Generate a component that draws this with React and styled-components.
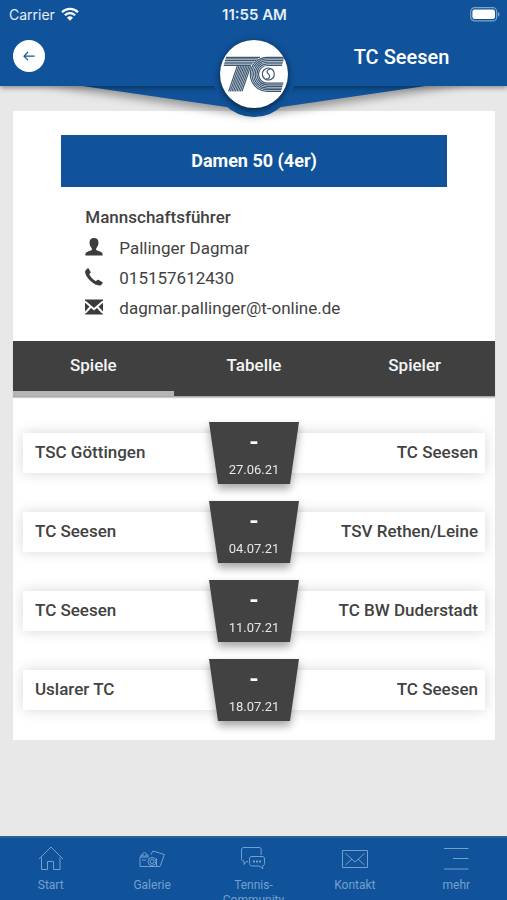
import React, { useState } from "react";
import styled, { createGlobalStyle } from "styled-components";

const GlobalStyle = createGlobalStyle`
  * {
    box-sizing: border-box;
  }

  body {
    margin: 0;
    background: #e8e8e8;
    font-family: Roboto, "Liberation Sans", sans-serif;
    color: #424242;
  }

  button {
    font-family: inherit;
    border: none;
    cursor: pointer;
  }
`;

const Page = styled.div`
  display: flex;
  flex-direction: column;
  height: 100vh;
  overflow: hidden;
`;

const Header = styled.header`
  position: relative;
  z-index: 2;
  flex-shrink: 0;
`;

const HeaderBar = styled.div`
  position: relative;
  background: #10539a;
  box-shadow: 0 2px 5px rgba(0, 0, 0, 0.4);
  color: #fff;
`;

const StatusBar = styled.div`
  display: grid;
  grid-template-columns: 1fr auto 1fr;
  align-items: center;
  height: 28px;
  padding: 0 7px 0 9px;
  font-family: Inter, Roboto, sans-serif;
  font-size: 14px;
  color: #e6eef7;
`;

const Carrier = styled.div`
  display: flex;
  align-items: center;
  gap: 6px;
`;

const Clock = styled.div`
  font-size: 15px;
  font-weight: 600;
`;

const Battery = styled.svg`
  justify-self: end;
`;

const TitleRow = styled.div`
  display: grid;
  grid-template-columns: 1fr 96px 1fr;
  align-items: center;
  height: 58px;
  padding: 0 8px 3px 13px;
`;

const BackButton = styled.button`
  display: flex;
  align-items: center;
  justify-content: center;
  width: 32px;
  height: 32px;
  padding: 0;
  border-radius: 50%;
  background: #fff;
  color: #10539a;
`;

const Title = styled.h1`
  grid-column: 3;
  margin: 0;
  padding-top: 2px;
  font-size: 20px;
  line-height: 24px;
  font-weight: 500;
  text-align: center;
`;

const Wedge = styled.svg`
  position: absolute;
  left: 8%;
  top: 80px;
  width: 84%;
  height: 31px;
  overflow: visible;
  filter: drop-shadow(0 5px 4px rgba(0, 0, 0, 0.35));
`;

const Badge = styled.div`
  position: absolute;
  left: 50%;
  top: 35px;
  margin-left: -41px;
  display: flex;
  align-items: center;
  justify-content: center;
  width: 82px;
  height: 82px;
  padding-bottom: 4px;
  border-radius: 50%;
  background: #10539a;
`;

const Logo = styled.svg`
  width: 68px;
  height: 68px;
  border-radius: 50%;
  background: #fff;
  box-shadow: 0 2px 7px rgba(0, 0, 0, 0.6);
`;

const Main = styled.main`
  flex: 1;
  min-height: 0;
  overflow: hidden;
  padding: 25px 12px 0 13px;
`;

const Card = styled.section`
  background: #fff;
  padding: 24px 0 19px;
`;

const TeamName = styled.h2`
  margin: 0 10% 15px;
  background: #10539a;
  color: #fff;
  font-size: 18px;
  line-height: 52px;
  font-weight: 700;
  text-align: center;
`;

const Contact = styled.div`
  padding: 0 15% 18px;
  font-size: 17px;
`;

const ContactHeading = styled.h3`
  margin: 0;
  font-size: 17px;
  line-height: 31px;
  font-weight: 500;
`;

const ContactRow = styled.div`
  display: flex;
  align-items: center;
  gap: 16px;
  height: 30px;
  line-height: 30px;

  svg {
    margin-bottom: 3px;
  }

  a {
    color: inherit;
    text-decoration: none;
  }
`;

const Tabs = styled.div`
  display: grid;
  grid-template-columns: repeat(3, 1fr);
  border-bottom: 1px solid #a9a9a9;
  box-shadow: 0 1px 1px rgba(0, 0, 0, 0.2);
`;

const Tab = styled.button`
  height: 55px;
  padding: 0 0 2px;
  border-bottom: 5px solid ${({ $active }) => ($active ? "#b5b5b5" : "#404040")};
  background: #404040;
  color: #f5f5f5;
  font-size: 17px;
  font-weight: 500;
`;

const Matches = styled.div`
  display: flex;
  flex-direction: column;
  gap: 17px;
  padding: 25px 10px 0;
`;

const Match = styled.article`
  display: grid;
  grid-template-columns: 1fr 90px 1fr;
  align-items: center;
`;

const Team = styled.div`
  height: 40px;
  margin: ${({ $away }) => ($away ? "0 0 0 -12px" : "0 -12px 0 0")};
  padding: ${({ $away }) => ($away ? "0 7px 0 0" : "0 0 0 12px")};
  background: #fff;
  box-shadow: 0 0 14px rgba(0, 0, 0, 0.16);
  font-size: 17px;
  line-height: 39px;
  font-weight: 500;
  text-align: ${({ $away }) => ($away ? "right" : "left")};
  white-space: nowrap;
`;

const ScoreShadow = styled.div`
  position: relative;
  z-index: 1;
  filter: drop-shadow(0 5px 4px rgba(0, 0, 0, 0.35));
`;

const Score = styled.div`
  display: flex;
  flex-direction: column;
  align-items: center;
  height: 62px;
  padding-top: 7px;
  background: #424242;
  clip-path: polygon(0 0, 100% 0, 90% 100%, 10% 100%);
  color: #fff;
`;

const Result = styled.strong`
  font-size: 24px;
  line-height: 26px;
  font-weight: 700;
`;

const MatchDate = styled.time`
  font-size: 13px;
  line-height: 30px;
  color: #e6e6e6;
`;

const Footer = styled.nav`
  display: grid;
  grid-template-columns: repeat(5, 1fr);
  flex-shrink: 0;
  height: 64px;
  overflow: hidden;
  border-top: 2px solid #2c6195;
  background: #10539a;
`;

const FooterLink = styled.a`
  display: flex;
  flex-direction: column;
  align-items: center;
  gap: 6px;
  min-width: 0;
  padding: 6px 16px 0;
  color: #74a0d0;
  font-size: 12px;
  line-height: 15px;
  text-align: center;
  text-decoration: none;

  svg {
    flex-shrink: 0;
  }
`;

const WifiIcon = () => (
  <svg width="18" height="14" viewBox="0 0 18 14" aria-hidden="true">
    <g fill="none" stroke="#fff" strokeWidth="2.3">
      <path d="M1 5.2a11.4 11.4 0 0 1 16 0" />
      <path d="M3.9 8.3a7.2 7.2 0 0 1 10.2 0" />
    </g>
    <path d="M6 10.7a4.3 4.3 0 0 1 6 0L9 13.8z" fill="#fff" />
  </svg>
);

const BatteryIcon = () => (
  <Battery width="30" height="15" viewBox="0 0 30 15" aria-hidden="true">
    <rect x="0.7" y="0.7" width="26" height="13.2" rx="4" fill="none" stroke="#7fa4cc" strokeWidth="1.2" />
    <rect x="2.4" y="2.6" width="22.6" height="9.4" rx="2.2" fill="#fff" />
    <path d="M28 5c2 .8 2 3.8 0 4.6z" fill="#7fa4cc" />
  </Battery>
);

const ArrowIcon = () => (
  <svg width="14" height="12" viewBox="0 0 14 12" aria-hidden="true">
    <path d="M6 2 2 6.2l4 4M2 6.2h10.6" fill="none" stroke="currentColor" strokeWidth="1.2" />
  </svg>
);

const ClubLogo = () => {
  const rings = [0, 1, 2, 3, 4, 5];
  return (
    <Logo viewBox="46 28 204 204" role="img" aria-label="TC Seesen">
      <g fill="none" stroke="#3c5872" strokeWidth="3.6">
        {rings.map((i) => (
          <path
            key={`c${i}`}
            d={`M${239 - i * 1.4} ${80 + i * 4.9}H188A${51 - i * 4.9} ${51 - i * 4.9} 0 0 0 188 ${182 - i * 4.9}H${229 + i * 1.4}`}
          />
        ))}
        {rings.map((i) => (
          <path key={`t${i}`} d={`M${64 - i * 1.4} ${80 + i * 4.9}H${166 - i * 5.5}`} />
        ))}
        {[0, 1, 2, 3, 4, 5, 6, 7, 8].map((i) => (
          <path key={`s${i}`} d={`M${98 + i * 5} 106L${72 + i * 5} 182`} />
        ))}
        <circle cx="191" cy="130" r="18" />
        <path d="M199 115c-9 0-14 5-11 11 2 4 8 6 7 12-1 5-6 7-10 6" />
      </g>
    </Logo>
  );
};

const UserIcon = () => (
  <svg width="18" height="18" viewBox="0 0 18 18" fill="#3c3c3c" aria-hidden="true">
    <path d="M9 0c3 0 4.6 2 4.5 4.7-.1 2.7-1.1 4.3-2.3 5.5v1.7c1.7 1 4.8 1.400 5.900 2.800.5.700.6 1.800.6 2.800H.3c0-1 .1-2.100.6-2.800 1.100-1.400 4.200-1.800 5.900-2.800v-1.700C5.600 9 4.600 7.400 4.500 4.700 4.400 2 6 0 9 0z" />
  </svg>
);

const PhoneIcon = () => (
  <svg width="18" height="18" viewBox="0 0 18 18" fill="#3c3c3c" aria-hidden="true">
    <path d="M.7 2.2 2.4.6c.5-.5 1-.5 1.4.1l1.7 3c.3.6.2 1-.2 1.4L4.2 6.300c1 2.400 3.700 5.200 6.700 7l1.400-1.200c.4-.4.9-.4 1.400-.1l3.500 2c.6.400.7.900.2 1.500l-1.300 1.400c-.9.800-2.400.8-4 .2C7.500 15.500 2 10.400.4 5.700-.1 4.200 0 3 .7 2.200z" />
  </svg>
);

const MailIcon = () => (
  <svg width="18" height="16" viewBox="0 0 18 16" aria-hidden="true">
    <rect width="18" height="15" y=".5" fill="#3c3c3c" />
    <path d="M0 2.500 9 10.300l9-7.800M0 14l5.800-6.200M18 14l-5.800-6.200" fill="none" stroke="#fff" strokeWidth="2" />
    <path d="M1.500 1.500h15L9 8z" fill="#3c3c3c" />
  </svg>
);

const FooterIcon = ({ children }) => (
  <svg
    width="28"
    height="28"
    viewBox="0 0 28 28"
    fill="none"
    stroke="currentColor"
    strokeWidth="1"
    strokeLinejoin="round"
    aria-hidden="true"
  >
    {children}
  </svg>
);

const navItems = [
  {
    label: "Start",
    icon: <path d="M2 15 14 3l12 12M4.500 13.500v12h6v-8h6v8h6.500v-12" />,
  },
  {
    label: "Galerie",
    icon: (
      <>
        <path d="M10.500 13H2v9.500h17M3 13v-2h2M8 11h2v2" />
        <circle cx="6.500" cy="10.500" r="1.800" />
        <circle cx="14" cy="17.500" r="4" />
        <circle cx="14" cy="17.500" r="2" />
        <path d="M4 16h4M13 10.500l2-3.500 11.500 3.500L22 22.500h-3.500v-8" />
      </>
    ),
  },
  {
    label: "Tennis-Community",
    icon: (
      <>
        <path d="M9 17.500H7.500L5 20.500v-3.400c-1.900-.2-2.500-1-2.500-2.300V6c0-1.600.8-2.500 2.500-2.500h15c1.600 0 2.200.9 2.200 2.500v5" />
        <path d="M13 12.500h10c1.800 0 2.500 1 2.500 2.500v4.500c0 1.400-.6 2-1.800 2.200V25l-3-3H13c-1.800 0-2.500-1-2.500-2.500V15c0-1.500.7-2.500 2.500-2.500z" />
        <path d="M14 17.500h2M17 17.500h2M20 17.500h2" strokeWidth="2" />
      </>
    ),
  },
  {
    label: "Kontakt",
    icon: <path d="M1.500 6.500h25v17h-25zM4.500 9.500l9.500 8.500 9.500-8.500M4.500 21l6.500-6M23.500 21 17 15" />,
  },
  {
    label: "mehr",
    icon: <path d="M2 4.500h24.500M11 14.500h15.500M2 25h24.500" />,
  },
];

const tabs = ["Spiele", "Tabelle", "Spieler"];

const matches = [
  { home: "TSC Göttingen", away: "TC Seesen", date: "27.06.21" },
  { home: "TC Seesen", away: "TSV Rethen/Leine", date: "04.07.21" },
  { home: "TC Seesen", away: "TC BW Duderstadt", date: "11.07.21" },
  { home: "Uslarer TC", away: "TC Seesen", date: "18.07.21" },
];

const App = () => {
  const [activeTab, setActiveTab] = useState("Spiele");

  return (
    <Page>
      <GlobalStyle />
      <Header>
        <Wedge viewBox="0 0 100 31" preserveAspectRatio="none" aria-hidden="true">
          <path d="M0 0h100L50 31z" fill="#10539a" />
        </Wedge>
        <HeaderBar>
          <StatusBar>
            <Carrier>
              Carrier
              <WifiIcon />
            </Carrier>
            <Clock>11:55 AM</Clock>
            <BatteryIcon />
          </StatusBar>
          <TitleRow>
            <BackButton type="button" aria-label="Zurück">
              <ArrowIcon />
            </BackButton>
            <Title>TC Seesen</Title>
          </TitleRow>
        </HeaderBar>
        <Badge>
          <ClubLogo />
        </Badge>
      </Header>

      <Main>
        <Card>
          <TeamName>Damen 50 (4er)</TeamName>
          <Contact>
            <ContactHeading>Mannschaftsführer</ContactHeading>
            <ContactRow>
              <UserIcon />
              <span>Pallinger Dagmar</span>
            </ContactRow>
            <ContactRow>
              <PhoneIcon />
              <a href="tel:015157612430">015157612430</a>
            </ContactRow>
            <ContactRow>
              <MailIcon />
              <a href="mailto:dagmar.pallinger@t-online.de">dagmar.pallinger@t-online.de</a>
            </ContactRow>
          </Contact>
          <Tabs role="tablist">
            {tabs.map((tab) => (
              <Tab
                key={tab}
                type="button"
                role="tab"
                aria-selected={tab === activeTab}
                $active={tab === activeTab}
                onClick={() => setActiveTab(tab)}
              >
                {tab}
              </Tab>
            ))}
          </Tabs>
          <Matches>
            {matches.map(({ home, away, date }) => (
              <Match key={date}>
                <Team>{home}</Team>
                <ScoreShadow>
                  <Score>
                    <Result>-</Result>
                    <MatchDate>{date}</MatchDate>
                  </Score>
                </ScoreShadow>
                <Team $away>{away}</Team>
              </Match>
            ))}
          </Matches>
        </Card>
      </Main>

      <Footer>
        {navItems.map(({ label, icon }) => (
          <FooterLink key={label} href="#">
            <FooterIcon>{icon}</FooterIcon>
            <span>{label}</span>
          </FooterLink>
        ))}
      </Footer>
    </Page>
  );
};

export default App;
